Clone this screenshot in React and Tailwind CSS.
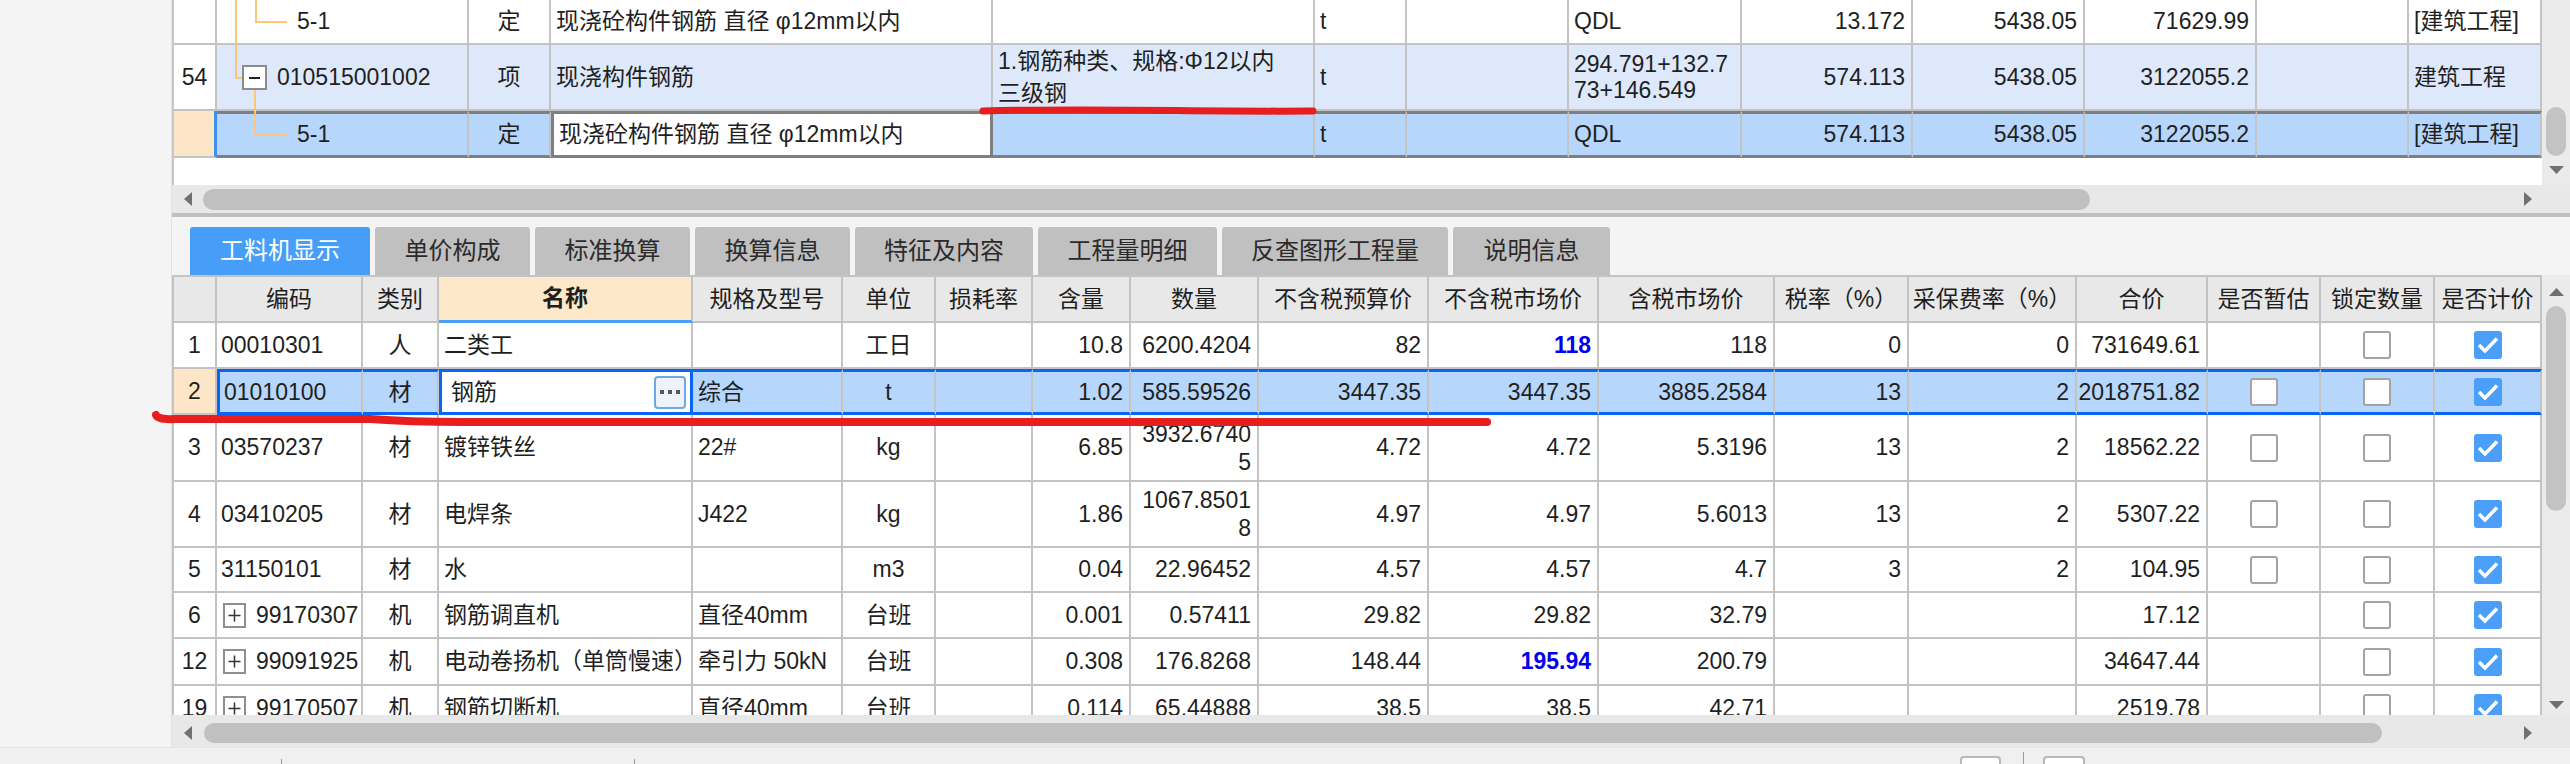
import React from "react";

const TOP_COLS =
  "grid-cols-[43px_252px_82px_442px_322px_92px_162px_173px_171px_172px_172px_152px_133px]";
const LOW_COLS =
  "grid-cols-[43px_146px_76px_254px_150px_93px_97px_98px_128px_170px_170px_176px_134px_168px_131px_113px_114px_107px]";

const G = "border-r-2 border-b-2 border-r-[#c3c3c3] border-b-[#c3c3c3]";
const TL = "absolute bg-[#fcc67c]";

const Cell = ({ v, a = "l", cls = "", lead = "leading-[27px]" }) => {
  const pos =
    a === "c" ? "justify-center" : a === "r" ? "justify-end pr-[6px]" : "justify-start pl-[5px]";
  return (
    <div className={`flex items-center overflow-hidden whitespace-nowrap ${pos} ${cls}`}>
      {Array.isArray(v) ? (
        <div className={`${lead} ${a === "r" ? "text-right" : ""}`}>
          {v.map((t, i) => (
            <div key={i}>{t}</div>
          ))}
        </div>
      ) : (
        v
      )}
    </div>
  );
};

// tree connectors for the top grid
const tree1 = (
  <>
    <span className={`${TL} left-[18px] top-0 bottom-[-2px] w-[2px]`} />
    <span className={`${TL} left-[38px] top-0 h-[22px] w-[2px]`} />
    <span className={`${TL} left-[38px] top-[21px] h-[2px] w-[32px]`} />
    <span className="pl-[80px]">5-1</span>
  </>
);

const tree54 = (
  <>
    <span className={`${TL} left-[18px] top-0 h-[33px] w-[2px]`} />
    <span className={`${TL} left-[18px] top-[32px] h-[2px] w-[7px]`} />
    <span className="absolute left-[25px] top-[20px] w-[25px] h-[25px] border-2 border-[#8c8c8c] bg-white flex items-center justify-center">
      <span className="w-[11px] h-[2px] bg-[#222]" />
    </span>
    <span className={`${TL} left-[37px] top-[45px] bottom-[-2px] w-[2px]`} />
    <span className="pl-[60px]">010515001002</span>
  </>
);

const treeSel = (
  <>
    <span className={`${TL} left-[37px] top-[-3px] h-[23px] w-[2px]`} />
    <span className={`${TL} left-[37px] top-[19px] h-[2px] w-[33px]`} />
    <span className="pl-[80px]">5-1</span>
  </>
);

const topAlign = ["c", "l", "c", "l", "l", "l", "l", "l", "r", "r", "r", "l", "l"];

const TopRow = ({ h, vals, tree, variant }) => (
  <div className={`grid ${TOP_COLS} ${h}`}>
    {vals.map((v, i) => {
      let bg = "bg-white";
      let bd = G;
      if (variant === "group" && i > 0) bg = "bg-[#dde9fb]";
      if (variant === "sel") {
        if (i === 0) {
          bg = "bg-[#fde6c8]";
          bd = "border-r-[3px] border-r-[#3d8ff0] border-b-2 border-b-[#c3c3c3]";
        } else if (i === 3) {
          bg = "bg-white";
          bd = "border-t-[3px] border-b-[3px] border-l-[3px] border-r-[3px] border-[#7f7f7f]";
        } else {
          bg = "bg-[#b6d6fb]";
          bd = "border-t-[3px] border-b-[3px] border-t-[#7f7f7f] border-b-[#7f7f7f] border-r-2 border-r-[#c3c3c3]";
        }
      }
      if (i === 1)
        return (
          <div key={i} className={`relative flex items-center whitespace-nowrap ${bg} ${bd}`}>
            {tree}
          </div>
        );
      return (
        <Cell
          key={i}
          v={v}
          a={topAlign[i]}
          cls={`${bg} ${bd}`}
          lead={i === 4 ? "leading-[32px]" : "leading-[26px]"}
        />
      );
    })}
  </div>
);

const Box = () => (
  <span className="w-[28px] h-[28px] rounded-[3px] border-2 border-[#a3a3a3] bg-white" />
);

const Checked = () => (
  <span className="w-[28px] h-[28px] rounded-[3px] bg-[#4b9ff8] flex">
    <svg width="28" height="28" viewBox="0 0 28 28">
      <path d="M5 14 L11 20 L23 7.5" stroke="white" strokeWidth="3.5" fill="none" />
    </svg>
  </span>
);

const Plus = () => (
  <span className="w-[23px] h-[25px] border-2 border-[#8f8f8f] bg-white flex items-center justify-center">
    <svg width="13" height="13" viewBox="0 0 13 13">
      <path d="M6.5 0.5 V12.5 M0.5 6.5 H12.5" stroke="#333" strokeWidth="1.5" />
    </svg>
  </span>
);

const heads = [
  "", "编码", "类别", "名称", "规格及型号", "单位", "损耗率", "含量", "数量", "不含税预算价",
  "不含税市场价", "含税市场价", "税率（%）", "采保费率（%）", "合价", "是否暂估", "锁定数量", "是否计价",
];

const lowAlign = ["c", "l", "c", "l", "l", "c", "c", "r", "r", "r", "r", "r", "r", "r", "r", "c", "c", "c"];

const lowRows = [
  { h: "h-[46px]", no: "1", code: "00010301", type: "人", name: "二类工", spec: "", unit: "工日", amt: "10.8", qty: "6200.4204", p1: "82", p2: "118", blue: true, p3: "118", tax: "0", fee: "0", total: "731649.61", est: null },
  { h: "h-[46px]", sel: true, no: "2", code: "01010100", type: "材", name: "钢筋", spec: "综合", unit: "t", amt: "1.02", qty: "585.59526", p1: "3447.35", p2: "3447.35", p3: "3885.2584", tax: "13", fee: "2", total: "2018751.82", est: false },
  { h: "h-[67px]", no: "3", code: "03570237", type: "材", name: "镀锌铁丝", spec: "22#", unit: "kg", amt: "6.85", qty: ["3932.6740", "5"], p1: "4.72", p2: "4.72", p3: "5.3196", tax: "13", fee: "2", total: "18562.22", est: false },
  { h: "h-[66px]", no: "4", code: "03410205", type: "材", name: "电焊条", spec: "J422", unit: "kg", amt: "1.86", qty: ["1067.8501", "8"], p1: "4.97", p2: "4.97", p3: "5.6013", tax: "13", fee: "2", total: "5307.22", est: false },
  { h: "h-[45px]", no: "5", code: "31150101", type: "材", name: "水", spec: "", unit: "m3", amt: "0.04", qty: "22.96452", p1: "4.57", p2: "4.57", p3: "4.7", tax: "3", fee: "2", total: "104.95", est: false },
  { h: "h-[46px]", no: "6", plus: true, code: "99170307", type: "机", name: "钢筋调直机", spec: "直径40mm", unit: "台班", amt: "0.001", qty: "0.57411", p1: "29.82", p2: "29.82", p3: "32.79", tax: "", fee: "", total: "17.12", est: null },
  { h: "h-[47px]", no: "12", plus: true, code: "99091925", type: "机", name: "电动卷扬机（单筒慢速）", spec: "牵引力 50kN", unit: "台班", amt: "0.308", qty: "176.8268", p1: "148.44", p2: "195.94", blue: true, p3: "200.79", tax: "", fee: "", total: "34647.44", est: null },
  { h: "h-[46px]", no: "19", plus: true, code: "99170507", type: "机", name: "钢筋切断机", spec: "直径40mm", unit: "台班", amt: "0.114", qty: "65.44888", p1: "38.5", p2: "38.5", p3: "42.71", tax: "", fee: "", total: "2519.78", est: null },
];

const LowRow = ({ r }) => {
  const vals = [
    r.no,
    r.plus ? (
      <span className="flex items-center gap-[10px] pl-[2px]">
        <Plus />
        {r.code}
      </span>
    ) : (
      r.code
    ),
    r.type,
    r.name,
    r.spec,
    r.unit,
    "",
    r.amt,
    r.qty,
    r.p1,
    r.blue ? <span className="text-[#0000f0] font-bold">{r.p2}</span> : r.p2,
    r.p3,
    r.tax,
    r.fee,
    r.total,
    r.est === null ? "" : <Box />,
    <Box />,
    <Checked />,
  ];
  return (
    <div className={`grid ${LOW_COLS} ${r.h}`}>
      {vals.map((v, i) => {
        let bg = "bg-white";
        let bd = G;
        if (r.sel) {
          if (i === 0) bg = "bg-[#fde6c8]";
          else if (i === 3) {
            bg = "bg-white";
            bd = "border-t-[3px] border-b-[3px] border-l-[3px] border-r-[3px] border-[#0a64f5]";
          } else {
            bg = "bg-[#b6d6fb]";
            bd = `border-t-[3px] border-b-[3px] border-t-[#0a64f5] border-b-[#0a64f5] border-r-2 border-r-[#c3c3c3] ${
              i === 1 ? "border-l-[3px] border-l-[#0a64f5]" : ""
            }`;
          }
        }
        if (r.sel && i === 3)
          return (
            <div key={i} className={`flex items-center justify-between ${bg} ${bd}`}>
              <span className="pl-[9px]">{v}</span>
              <span className="mr-[4px] w-[32px] h-[33px] rounded-[4px] border-2 border-[#6aaae8] bg-[#eef2fa] flex items-center justify-center gap-[4px]">
                <span className="w-[4px] h-[4px] bg-[#555]" />
                <span className="w-[4px] h-[4px] bg-[#555]" />
                <span className="w-[4px] h-[4px] bg-[#555]" />
              </span>
            </div>
          );
        return <Cell key={i} v={v} a={lowAlign[i]} cls={`${bg} ${bd} ${i === 1 ? "!pl-[4px]" : ""}`} lead="leading-[28px]" />;
      })}
    </div>
  );
};

const ArrowL = ({ cls = "" }) => (
  <svg width="8" height="14" viewBox="0 0 8 14" className={cls}>
    <polygon points="8,0 0,7 8,14" fill="#707070" />
  </svg>
);
const ArrowR = ({ cls = "" }) => (
  <svg width="8" height="14" viewBox="0 0 8 14" className={cls}>
    <polygon points="0,0 8,7 0,14" fill="#707070" />
  </svg>
);
const ArrowU = ({ cls = "" }) => (
  <svg width="15" height="8" viewBox="0 0 15 8" className={cls}>
    <polygon points="0,8 7.5,0 15,8" fill="#707070" />
  </svg>
);
const ArrowD = ({ cls = "" }) => (
  <svg width="15" height="8" viewBox="0 0 15 8" className={cls}>
    <polygon points="0,0 7.5,8 15,0" fill="#707070" />
  </svg>
);

const tabs = [
  ["工料机显示", "w-[180px]"],
  ["单价构成", "w-[155px]"],
  ["标准换算", "w-[155px]"],
  ["换算信息", "w-[155px]"],
  ["特征及内容", "w-[178px]"],
  ["工程量明细", "w-[179px]"],
  ["反查图形工程量", "w-[226px]"],
  ["说明信息", "w-[157px]"],
];

export default function App() {
  return (
    <div className="relative w-[2570px] h-[764px] overflow-hidden bg-[#f4f4f4] text-[23px] text-[#1f1f1f] font-['Liberation_Sans','Noto_Sans_CJK_SC',sans-serif]">
      <div className="flex h-[747px]">
        {/* left panel */}
        <div className="w-[172px] shrink-0 bg-[#f4f4f4] border-r border-r-[#e2e2e2]" />

        <div className="flex flex-col w-[2398px]">
          {/* upper grid */}
          <div className="flex h-[185px]">
            <div className="w-[2370px] bg-white border-l-2 border-l-[#c8c8c8] overflow-hidden">
              <TopRow
                h="h-[45px]"
                tree={tree1}
                vals={["", "", "定", "现浇砼构件钢筋 直径 φ12mm以内", "", "t", "", "QDL", "13.172", "5438.05", "71629.99", "", "[建筑工程]"]}
              />
              <TopRow
                h="h-[66px]"
                variant="group"
                tree={tree54}
                vals={["54", "", "项", "现浇构件钢筋", ["1.钢筋种类、规格:Φ12以内", "三级钢"], "t", "", ["294.791+132.7", "73+146.549"], "574.113", "5438.05", "3122055.2", "", "建筑工程"]}
              />
              <TopRow
                h="h-[47px]"
                variant="sel"
                tree={treeSel}
                vals={["", "", "定", "现浇砼构件钢筋 直径 φ12mm以内", "", "t", "", "QDL", "574.113", "5438.05", "3122055.2", "", "[建筑工程]"]}
              />
            </div>
            <div className="w-[28px] bg-[#ebebeb] flex flex-col items-center">
              <div className="mt-[107px] w-[20px] h-[49px] rounded-full bg-[#c3c3c3]" />
              <ArrowD cls="mt-[10px]" />
            </div>
          </div>

          {/* upper h-scroll */}
          <div className="flex h-[28px] bg-[#e8e8e8]">
            <div className="w-[2370px] flex items-center">
              <ArrowL cls="ml-[12px]" />
              <div className="ml-[11px] w-[1887px] h-[21px] rounded-full bg-[#c0c0c0]" />
              <ArrowR cls="ml-auto mr-[10px]" />
            </div>
            <div className="w-[28px]" />
          </div>
          <div className="h-[4px] bg-[#bfbfbf]" />

          {/* tabs */}
          <div className="h-[58px] pt-[10px] pl-[18px] flex gap-[5px] bg-[#f4f4f4]">
            {tabs.map(([t, w], i) => (
              <div
                key={t}
                className={`h-[48px] ${w} rounded-t-[3px] flex items-center justify-center text-[24px] ${
                  i === 0 ? "bg-[#479ef8] text-white" : "bg-[#c0c0c0] text-[#2b2b2b]"
                }`}
              >
                {t}
              </div>
            ))}
          </div>

          {/* lower grid */}
          <div className="flex h-[440px]">
            <div className="w-[2370px] bg-white border-l-2 border-l-[#c3c3c3] overflow-hidden">
              <div className={`grid ${LOW_COLS} h-[48px]`}>
                {heads.map((t, i) => (
                  <div
                    key={i}
                    className={`flex items-center justify-center whitespace-nowrap overflow-hidden border-t-2 border-t-[#c3c3c3] border-r-2 border-r-[#c3c3c3] ${
                      i === 3
                        ? "bg-[#fde8c9] font-bold border-b-[3px] border-b-[#4a9ef5]"
                        : "bg-[#e8e8e8] border-b-2 border-b-[#c3c3c3]"
                    }`}
                  >
                    {t}
                  </div>
                ))}
              </div>
              {lowRows.map((r) => (
                <LowRow key={r.no} r={r} />
              ))}
            </div>
            <div className="w-[28px] bg-[#ebebeb] flex flex-col items-center">
              <ArrowU cls="mt-[13px]" />
              <div className="mt-[10px] w-[20px] h-[205px] rounded-full bg-[#c3c3c3]" />
              <ArrowD cls="mt-[190px]" />
            </div>
          </div>

          {/* lower h-scroll */}
          <div className="flex h-[32px] bg-[#e8e8e8]">
            <div className="w-[2370px] flex items-center pt-[4px]">
              <ArrowL cls="ml-[12px]" />
              <div className="ml-[12px] w-[2178px] h-[20px] rounded-full bg-[#c0c0c0]" />
              <ArrowR cls="ml-auto mr-[10px]" />
            </div>
            <div className="w-[28px]" />
          </div>
        </div>
      </div>

      {/* status bar */}
      <div className="h-[17px] bg-[#f0f0f0] border-t border-t-[#e4e4e4] flex items-end">
        <span className="ml-[281px] w-px h-[5px] bg-[#9a9a9a]" />
        <span className="ml-[352px] w-px h-[5px] bg-[#9a9a9a]" />
        <span className="ml-[1325px] w-[41px] h-[8px] rounded-t-[4px] border-2 border-b-0 border-[#b8b8b8] bg-white" />
        <span className="ml-[22px] w-px h-[12px] bg-[#9a9a9a]" />
        <span className="ml-[19px] w-[42px] h-[8px] rounded-t-[4px] border-2 border-b-0 border-[#b8b8b8] bg-white" />
      </div>

      {/* red hand-drawn marks */}
      <svg className="absolute left-0 top-0 pointer-events-none" width="2570" height="764">
        <path d="M983 111 C1100 108 1200 112 1313 111" stroke="#e61e1e" strokeWidth="7" strokeLinecap="round" fill="none" />
        <path
          d="M156 415 Q158 420 175 419 L370 419 Q410 422 460 422 L1487 422"
          stroke="#e61e1e"
          strokeWidth="8"
          strokeLinecap="round"
          fill="none"
        />
      </svg>
    </div>
  );
}
